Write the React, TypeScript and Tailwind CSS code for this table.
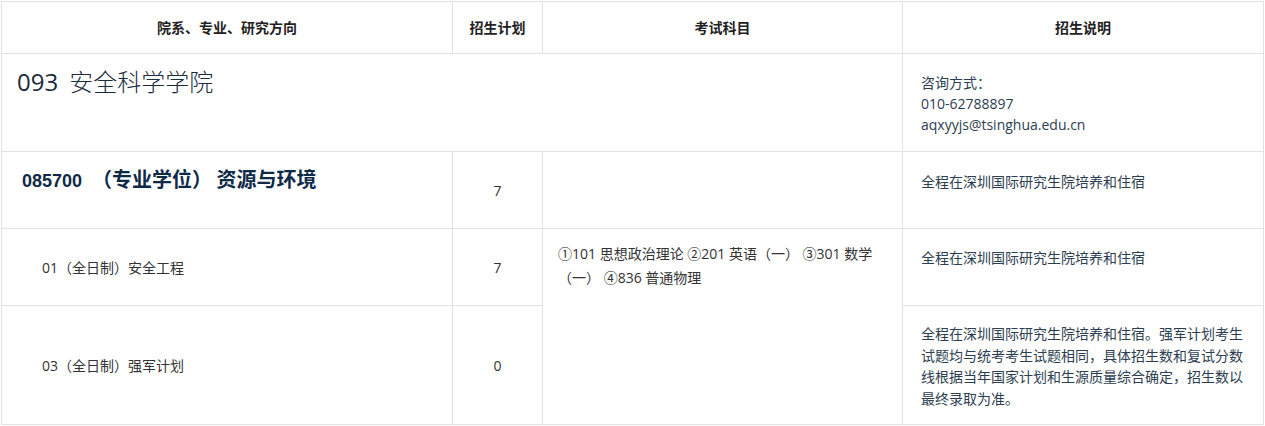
export default function App() {
  const cell = "border border-[#dfe3e8]";
  const body = "font-['Open_Sans','Noto_Sans_CJK_SC',sans-serif]";

  return (
    <div className={`bg-white pl-px pt-px ${body}`}>
      <table className="table-fixed border-collapse w-[1262px] text-[14px] text-[#333]">
        <colgroup>
          <col className="w-[451px]" />
          <col className="w-[90px]" />
          <col className="w-[360px]" />
          <col className="w-[361px]" />
        </colgroup>
        <thead>
          <tr className="h-[52px] font-['Noto_Sans_CJK_SC',sans-serif] font-bold text-[14px] text-[#222]">
            <th className={cell}>院系、专业、研究方向</th>
            <th className={cell}>招生计划</th>
            <th className={cell}>考试科目</th>
            <th className={cell}>招生说明</th>
          </tr>
        </thead>
        <tbody>
          {/* 院系 */}
          <tr className="h-[98px]">
            <td colSpan={3} className={`${cell} align-top pl-[15px] pt-[11px]`}>
              <span className="text-[24px] leading-[32px] text-[#1a2b3c]">
                093
                <span className="ml-[11px] font-['Noto_Sans_CJK_SC',serif] font-light">安全科学学院</span>
              </span>
            </td>
            <td className={`${cell} align-top pl-[18px] pr-[18px] pt-[18px] leading-[21px] text-[#2c3e50]`}>
              咨询方式：
              <br />
              010-62788897
              <br />
              aqxyyjs@tsinghua.edu.cn
            </td>
          </tr>

          {/* 专业 */}
          <tr className="h-[77px]">
            <td className={`${cell} align-top pl-[20px] pt-[13px] leading-[28px] text-[#0e2a47] font-bold`}>
              <span className="font-['Liberation_Sans',sans-serif] text-[18px]">085700</span>
              <span className="ml-[10px] font-['Noto_Sans_CJK_SC',sans-serif] text-[20px] font-semibold">（专业学位） 资源与环境</span>
            </td>
            <td className={`${cell} text-center align-middle`}>7</td>
            <td className={cell}></td>
            <td className={`${cell} align-top pl-[18px] pr-[18px] pt-[19px] leading-[21px] text-[#2c3e50]`}>
              全程在深圳国际研究生院培养和住宿
            </td>
          </tr>

          {/* 研究方向 01 */}
          <tr className="h-[77px]">
            <td className={`${cell} align-middle pl-[40px]`}>01（全日制）安全工程</td>
            <td className={`${cell} text-center align-middle`}>7</td>
            <td rowSpan={2} className={`${cell} align-top pl-[15px] pr-[10px] pt-[13px] leading-[24px]`}>
              ①101 思想政治理论 ②201 英语（一） ③301 数学
              <br />
              （一） ④836 普通物理
            </td>
            <td className={`${cell} align-top pl-[18px] pr-[18px] pt-[18px] leading-[21px] text-[#2c3e50]`}>
              全程在深圳国际研究生院培养和住宿
            </td>
          </tr>

          {/* 研究方向 03 */}
          <tr className="h-[119px]">
            <td className={`${cell} align-middle pl-[40px]`}>03（全日制）强军计划</td>
            <td className={`${cell} text-center align-middle`}>0</td>
            <td className={`${cell} align-top pl-[18px] pr-[18px] pt-[17px] leading-[21.5px] text-[#2c3e50]`}>
              全程在深圳国际研究生院培养和住宿。强军计划考生试题均与统考考生试题相同，具体招生数和复试分数线根据当年国家计划和生源质量综合确定，招生数以最终录取为准。
            </td>
          </tr>
        </tbody>
      </table>
    </div>
  );
}
